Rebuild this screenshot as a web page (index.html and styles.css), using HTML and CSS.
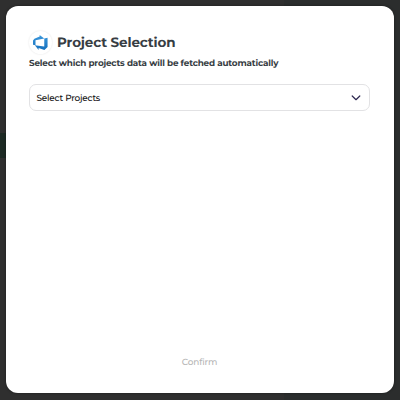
FILE: index.html
```html
<!DOCTYPE html>
<html lang="en">
<head>
<meta charset="UTF-8">
<title>Project Selection</title>
<link rel="stylesheet" href="styles.css">
</head>
<body>

<div class="backdrop-panel"></div>
<div class="backdrop-button"></div>

<div class="modal">
	<div class="modal-header">
		<div class="logo">
			<svg width="15" height="15" viewBox="0 0 24 24">
				<defs>
					<linearGradient id="devops" x1="0" y1="1" x2="0" y2="0">
						<stop offset="0" stop-color="#1670bd" />
						<stop offset="1" stop-color="#3b98dc" />
					</linearGradient>
				</defs>
				<path fill="url(#devops)" d="M0 8.877L2.247 5.91l8.405-3.416V.022l7.37 5.393L4 8.338v8.225L0 15.707zm23.3-4.45v14.651l-5.053 4.9-9.303-3.057v3.056l-5.978-7.416 15.057 1.798V5.415z" />
			</svg>
		</div>
		<h1 class="title">Project Selection</h1>
	</div>
	<p class="subtitle">Select which projects data will be fetched automatically</p>
	<div class="select">
		<span class="select-label">Select Projects</span>
		<svg class="chevron" width="10" height="6" viewBox="0 0 10 6">
			<path d="M1.2 1L5 4.7L8.8 1" />
		</svg>
	</div>
	<button class="confirm" disabled>Confirm</button>
</div>

</body>
</html>
```

FILE: styles.css
```css
* {
	box-sizing: border-box;
}

body {
	margin: 0;
	height: 400px;
	padding: 6px 6px 7px 5.5px;
	background-color: #2f2f2f;
	font-family: Montserrat, Inter, sans-serif;
	text-rendering: geometricPrecision;
	overflow: hidden;
}

/* *** Page behind the modal *** */
.backdrop-panel {
	position: absolute;
	top: 0;
	right: 0;
	width: 116px;
	height: 400px;
	background-color: #2b2d2d;
}

.backdrop-button {
	position: absolute;
	top: 133px;
	left: 0;
	width: 8px;
	height: 25px;
	background-color: #1d2a24;
}

/* *** Modal *** */
.modal {
	position: relative;
	display: flex;
	flex-direction: column;
	height: 387px;
	padding: 24px 24px 22px 23.5px;
	border-radius: 12px;
	background-color: #fff;
	box-shadow: 0 0 3px rgba(0, 0, 0, 0.4);
}

.modal-header {
	display: flex;
	align-items: center;
	gap: 5px;
	height: 24px;
}

.logo {
	display: flex;
	align-items: center;
	justify-content: center;
	width: 23px;
	height: 23px;
	border-radius: 50%;
	box-shadow: 0 0 2px rgba(0, 0, 0, 0.12);
}

.title {
	margin: 0;
	padding-top: 1px;
	color: #373d43;
	font-size: 13.5px;
	font-weight: 700;
	line-height: 24px;
	letter-spacing: -0.13px;
	white-space: nowrap;
}

.subtitle {
	margin: 4px 0 0;
	color: #373d43;
	font-size: 8.8px;
	font-weight: 700;
	line-height: 12px;
	letter-spacing: -0.17px;
	white-space: nowrap;
}

/* *** Dropdown *** */
.select {
	display: flex;
	align-items: center;
	justify-content: space-between;
	height: 27px;
	margin-top: 14px;
	padding: 0 8px 0 6.5px;
	border: 1px solid #e2e2e4;
	border-radius: 7px;
}

.select-label {
	padding-top: 2px;
	color: #111;
	font-size: 8.9px;
	font-weight: 500;
	line-height: 12px;
	letter-spacing: -0.2px;
	white-space: nowrap;
}

.chevron path {
	fill: none;
	stroke: #2d2850;
	stroke-width: 1.2;
	stroke-linecap: round;
	stroke-linejoin: round;
}

/* *** Footer *** */
.confirm {
	align-self: center;
	margin-top: auto;
	padding: 0;
	border: none;
	background: none;
	color: #b5b5b5;
	font-family: inherit;
	font-size: 8.9px;
	font-weight: 500;
	line-height: 16px;
	letter-spacing: -0.15px;
	text-rendering: inherit;
}
```
